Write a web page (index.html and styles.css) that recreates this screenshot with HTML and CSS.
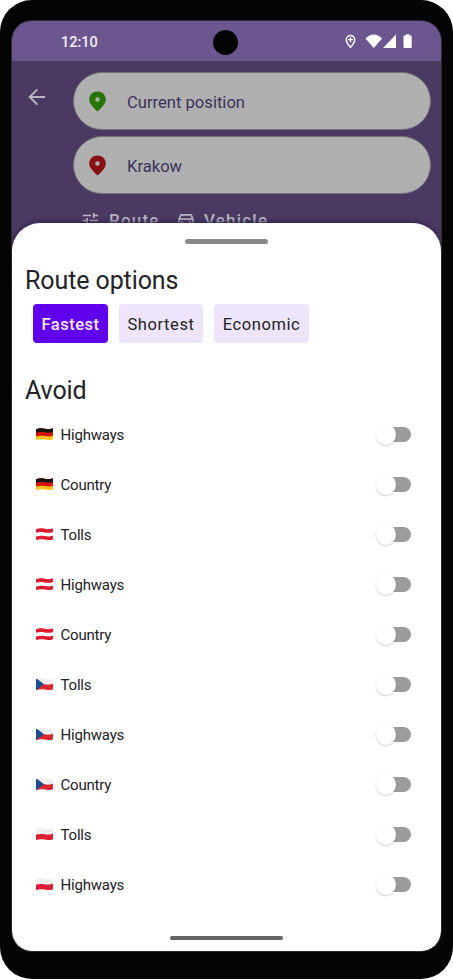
FILE: index.html
```
<!DOCTYPE html>
<html lang="en">
<head>
<meta charset="utf-8">
<title>Route options</title>
<link rel="stylesheet" href="styles.css">
</head>
<body>
<svg class="defs" aria-hidden="true">
  <defs>
    <clipPath id="wave"><path d="M0 1.2C3 .1 6 .1 9 .8S15 1.3 18 .3V11.800C15 12.900 12 12.900 9 12.200S3 11.800 0 12.700Z"/></clipPath>
    <symbol id="de" viewBox="0 0 18 13"><g clip-path="url(#wave)"><path fill="#f8c51c" d="M0 0h18v13H0z"/><path fill="#d81408" d="M0 0h18v8.200C14 9.300 12 9 9 8.500S3 8.200 0 9z"/><path fill="#171411" d="M0 0h18v4.200C14 5.300 12 5 9 4.500S3 4.200 0 5z"/></g></symbol>
    <symbol id="at" viewBox="0 0 18 13"><g clip-path="url(#wave)"><path fill="#e0192d" d="M0 0h18v13H0z"/><path fill="#fff" d="M0 5C3 4.200 6 4.200 9 4.700S14 5.300 18 4.200V8.200C14 9.300 12 9 9 8.500S3 8.200 0 9z"/></g></symbol>
    <symbol id="cz" viewBox="0 0 18 13"><g clip-path="url(#wave)"><path fill="#eee" d="M0 0h18v13H0z"/><path fill="#df2730" d="M0 7C3 6.200 6 6.200 9 6.700S14 7.300 18 6.200V13H0z"/><path fill="#1b4e8c" d="M0 0L8.500 6.700L0 13z"/></g></symbol>
    <symbol id="pl" viewBox="0 0 18 13"><g clip-path="url(#wave)"><path fill="#eee" d="M0 0h18v13H0z"/><path fill="#df1c35" d="M0 7C3 6.200 6 6.200 9 6.700S14 7.300 18 6.200V13H0z"/></g></symbol>
    <symbol id="pin" viewBox="0 0 17 21"><path fill="currentColor" d="M8.500 .5C3.800 .5 .2 4 .2 8.300c0 4.700 4.500 8.800 8.300 12.200c3.800-3.400 8.300-7.500 8.300-12.200C16.800 4 13.200 .5 8.500 .5z"/><circle cx="8.500" cy="8.500" r="2.200" fill="#b0b0b0"/></symbol>
  </defs>
</svg>
<div class="phone">
  <div class="screen">
    <div class="status">
      <span class="time">12:10</span>
      <svg class="status-icons" viewBox="0 0 70 18" width="70" height="18">
        <path fill="none" stroke="#fff" stroke-width="1.500" d="M7.500 15.300C5.200 12.700 3.300 10.200 3.300 7.700a4.200 4.200 0 0 1 8.400 0c0 2.500-1.900 5-4.200 7.600z"/>
        <path stroke="#fff" stroke-width="1.300" d="M7.500 5.300v5M5 7.700h5"/>
        <path fill="#fff" d="M22.500 6.400Q30.700-1.500 39 6.400L30.700 16zM40 16L53 2.500V16zM60.500 4.500q0-1 1-1h1.300V2.300h3.600v1.200h1.300q1 0 1 1V15q0 1-1 1h-6.200q-1 0-1-1z"/>
      </svg>
    </div>
    <div class="camera"></div>
    <div class="header">
      <svg class="back" viewBox="0 0 18 18" width="18" height="18"><path fill="none" stroke="#bab7c3" stroke-width="1.900" d="M17 9H2M9.300 1.400L1.700 9l7.600 7.600"/></svg>
      <div class="search">
        <div class="field"><svg class="pin from"><use href="#pin"/></svg><span>Current position</span></div>
        <div class="field"><svg class="pin to"><use href="#pin"/></svg><span>Krakow</span></div>
        <div class="tabs">
          <svg class="tune" viewBox="3 3 18 18"><path fill="currentColor" d="M3 17v2h6v-2H3zM3 5v2h10V5H3zm10 16v-2h8v-2h-8v-2h-2v6h2zM7 9v2H3v2h4v2h2V9H7zm14 4v-2H11v2h10zm-6-4h2V7h4V5h-4V3h-2v6z"/></svg>
          <span class="tab-route">Route</span>
          <svg class="car" viewBox="3 4 18 17"><path fill="currentColor" d="M18.920 6.010C18.720 5.420 18.160 5 17.500 5h-11c-.66 0-1.210.42-1.420 1.010L3 12v8c0 .55.45 1 1 1h1c.55 0 1-.45 1-1v-1h12v1c0 .55.45 1 1 1h1c.55 0 1-.45 1-1v-8l-2.080-5.990zM6.850 7h10.290l1.040 3H5.810l1.040-3zM19 17H5v-5h14v5z"/><circle cx="7.500" cy="14.500" r="1.500" fill="currentColor"/><circle cx="16.500" cy="14.500" r="1.500" fill="currentColor"/></svg>
          <span>Vehicle</span>
        </div>
      </div>
    </div>
    <div class="sheet">
      <div class="handle"></div>
      <h2 class="title">Route options</h2>
      <div class="chips">
        <span class="chip active">Fastest</span>
        <span class="chip shortest">Shortest</span>
        <span class="chip economic">Economic</span>
      </div>
      <h2 class="title avoid">Avoid</h2>
      <div class="list">
        <div class="row"><svg class="flag"><use href="#de"/></svg><span>Highways</span><i class="switch"></i></div>
        <div class="row"><svg class="flag"><use href="#de"/></svg><span>Country</span><i class="switch"></i></div>
        <div class="row"><svg class="flag"><use href="#at"/></svg><span>Tolls</span><i class="switch"></i></div>
        <div class="row"><svg class="flag"><use href="#at"/></svg><span>Highways</span><i class="switch"></i></div>
        <div class="row"><svg class="flag"><use href="#at"/></svg><span>Country</span><i class="switch"></i></div>
        <div class="row"><svg class="flag"><use href="#cz"/></svg><span>Tolls</span><i class="switch"></i></div>
        <div class="row"><svg class="flag"><use href="#cz"/></svg><span>Highways</span><i class="switch"></i></div>
        <div class="row"><svg class="flag"><use href="#cz"/></svg><span>Country</span><i class="switch"></i></div>
        <div class="row"><svg class="flag"><use href="#pl"/></svg><span>Tolls</span><i class="switch"></i></div>
        <div class="row"><svg class="flag"><use href="#pl"/></svg><span>Highways</span><i class="switch"></i></div>
      </div>
      <div class="home-bar"></div>
    </div>
  </div>
</div>
</body>
</html>
```
FILE: styles.css
```
* { box-sizing: border-box; }
body { margin: 0; background: #fff; font-family: Roboto, "Liberation Sans", sans-serif; color: #232226; }
.defs { position: absolute; width: 0; height: 0; }
.phone { width: 453px; height: 979px; padding: 21px 12px 28px; background: #040404; border-radius: 32px; }
.screen { position: relative; height: 930px; border-radius: 20px; overflow: hidden; background: #4a3961; box-shadow: 0 0 0 1px #2c2c2e; }
.status { display: flex; justify-content: space-between; align-items: center; height: 40px; padding: 0 24px 0 49px; background: #6b568f; }
.time { font-size: 14.500px; font-weight: 500; color: #f5effb; letter-spacing: 0; padding-top: 2px; }
.status-icons { margin-right: 4px; }
.camera { position: absolute; top: 9px; left: 201px; width: 25px; height: 25px; border-radius: 50%; background: #040404; }
.header { display: flex; align-items: flex-start; padding: 11px 10px 0 16px; }
.back { flex: none; margin-top: 16px; }
.search { margin-left: 27px; width: 358px; flex: none; }
.field { display: flex; align-items: center; height: 58px; margin-bottom: 6px; padding-left: 15px; border: 1px solid #77717d; border-radius: 29px; background: #b0b0b0; color: #3c3059; font-size: 16.600px; }
.field span { padding-top: 2px; margin-left: 21px; }
.pin { width: 17px; height: 21px; color: #267500; }
.pin.to { color: #881014; }
.tabs { display: flex; align-items: center; height: 24px; margin-top: 14px; padding-left: 10px; color: #b9b6c1; font-size: 17px; font-weight: 500; letter-spacing: 1.200px; }
.tune { width: 15px; height: 15px; margin-right: 11px; }
.car { width: 16px; height: 15px; margin: 0 10px 0 19px; }
.tab-route { width: 50px; }
.sheet { position: absolute; top: 202px; left: 0; right: 0; bottom: 0; background: #fff; border-radius: 28px 28px 20px 20px; box-shadow: 0 -1px 4px #2d1f4a; }
.handle { width: 83px; height: 5px; margin: 16px 0 0 173px; border-radius: 3px; background: #8a8a8a; }
.title { margin: 21px 0 0 13px; height: 32px; line-height: 32px; font-size: 25px; font-weight: 400; letter-spacing: -.1px; }
.chips { display: flex; gap: 11px; margin: 7px 0 0 21px; }
.chip { display: flex; align-items: center; justify-content: center; width: 75px; height: 39px; padding-top: 2px; border-radius: 4px; background: #eee5fc; font-size: 16.500px; letter-spacing: .6px; }
.chip.active { background: #6000ee; color: #f6ebff; font-weight: 500; letter-spacing: .5px; }
.shortest { width: 84px; }
.economic { width: 95px; }
.title.avoid { margin-top: 32px; }
.list { margin-top: 2px; padding: 0 30px 0 24px; }
.row { display: flex; align-items: center; height: 50px; font-size: 15px; letter-spacing: -.2px; }
.row span { padding-top: 2px; }
.flag { width: 17px; height: 12.300px; margin: 1px 7.500px 0 0; }
.switch { position: relative; width: 30px; height: 15px; margin-left: auto; border-radius: 8px; background: #9c9c9c; }
.switch::before { content: ""; position: absolute; left: -5px; top: -3px; width: 20px; height: 21px; border-radius: 50%; background: #fff; box-shadow: 0 1px 2px #0003; }
.home-bar { width: 113px; height: 4px; margin: 27px 0 0 158px; border-radius: 2px; background: #646464; }
```
